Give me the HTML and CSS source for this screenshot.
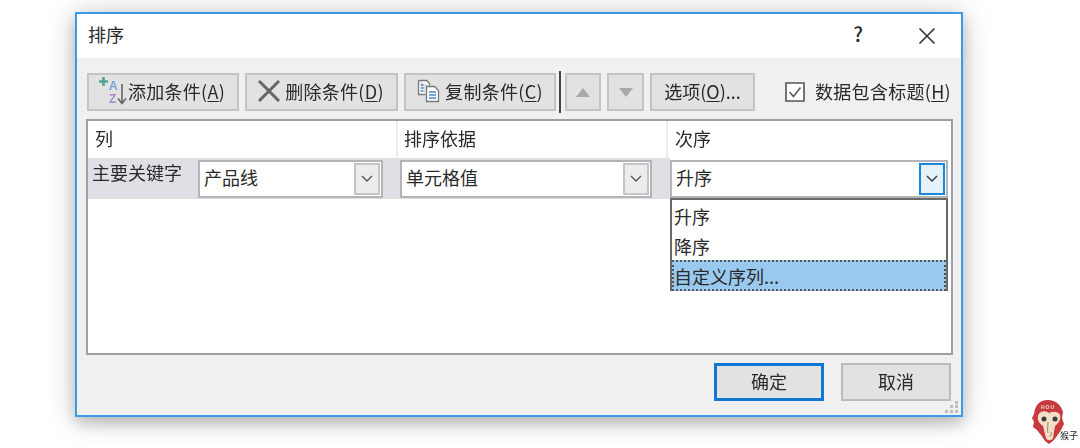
FILE: index.html
```html
<!DOCTYPE html>
<html lang="zh-CN">
<head>
<meta charset="utf-8">
<title>排序</title>
<link rel="stylesheet" href="styles.css">
</head>
<body>
<div class="dialog">
  <header class="titlebar">
    <span class="title">排序</span>
    <span class="help">?</span>
    <svg class="close" width="18" height="18" viewBox="0 0 18 18"><path d="M1.500 1.500 16.500 16.500M16.500 1.500 1.500 16.500" stroke="#333" stroke-width="1.600" fill="none"/></svg>
  </header>
  <div class="content">
    <div class="toolbar">
      <button class="btn btn-wide">
        <svg class="ico-sort" width="29" height="32" viewBox="0 0 29 32">
          <path d="M4.500 2v9M0 6.500h9" stroke="#4fa58c" stroke-width="2.600"/>
          <text x="10" y="15" class="ico-a">A</text>
          <text x="10" y="28" class="ico-z">Z</text>
          <path d="M23 9v19M19 23.500l4 5 4-5" stroke="#666" stroke-width="1.600" fill="none"/>
        </svg>
        <span class="btn-label">添加条件(<u>A</u>)</span>
      </button>
      <button class="btn btn-del">
        <svg width="22" height="22" viewBox="0 0 22 22"><path d="M1 1 21 21M21 1 1 21" stroke="#666" stroke-width="3" fill="none"/></svg>
        <span class="btn-label">删除条件(<u>D</u>)</span>
      </button>
      <button class="btn btn-copy">
        <svg width="24" height="24" viewBox="0 0 24 24">
          <path d="M1.500 1.500h8l3 3v2M1.500 1.500v14h7" fill="#fff" stroke="#777" stroke-width="1.300"/>
          <path d="M9.500 7.500h8l4 4v11h-12z" fill="#fff" stroke="#777" stroke-width="1.300"/>
          <path d="M3.500 6h3M3.500 9h3M3.500 12h3" stroke="#4d86c6" stroke-width="1.300"/>
          <path d="M12 13h7M12 16h7M12 19h7" stroke="#4d86c6" stroke-width="1.300"/>
        </svg>
        <span class="btn-label">复制条件(<u>C</u>)</span>
      </button>
      <span class="tool-sep"></span>
      <button class="btn btn-arrow btn-up"><span class="tri tri-up"></span></button>
      <button class="btn btn-arrow"><span class="tri tri-down"></span></button>
      <button class="btn btn-options">选项(<u>O</u>)...</button>
      <label class="check">
        <svg width="20" height="20" viewBox="0 0 20 20"><path d="M1 1h18v18H1z" fill="#fff" stroke="#555" stroke-width="1.600"/><path d="M4.500 10l4 4.500 7-9" stroke="#555" stroke-width="1.500" fill="none"/></svg>
        <span class="btn-label">数据包含标题(<u>H</u>)</span>
      </label>
    </div>
    <div class="grid">
      <div class="head-row">
        <div class="head-cell head-a">列</div>
        <div class="head-cell head-b">排序依据</div>
        <div class="head-cell head-c">次序</div>
      </div>
      <div class="row">
        <div class="row-label">主要关键字</div>
        <div class="combo combo-a"><span class="combo-text">产品线</span>
          <span class="arrow"><svg width="12" height="8" viewBox="0 0 12 8"><path d="M1 1l5 5 5-5" stroke="#555" stroke-width="1.400" fill="none"/></svg></span></div>
        <div class="combo combo-b"><span class="combo-text">单元格值</span>
          <span class="arrow"><svg width="12" height="8" viewBox="0 0 12 8"><path d="M1 1l5 5 5-5" stroke="#555" stroke-width="1.400" fill="none"/></svg></span></div>
        <div class="combo combo-c"><span class="combo-text">升序</span>
          <span class="arrow arrow-on"><svg width="12" height="8" viewBox="0 0 12 8"><path d="M1 1l5 5 5-5" stroke="#333" stroke-width="1.400" fill="none"/></svg></span>
          <ul class="menu">
            <li class="menu-item">升序</li>
            <li class="menu-item">降序</li>
            <li class="menu-item menu-sel">自定义序列...</li>
          </ul>
        </div>
      </div>
    </div>
    <div class="footer">
      <button class="btn btn-foot btn-ok">确定</button>
      <button class="btn btn-foot btn-cancel">取消</button>
    </div>
    <svg class="grip" width="14" height="14" viewBox="0 0 14 14" fill="#bdbdbd">
      <rect x="10" y="1" width="3" height="3"/><rect x="5" y="5" width="3" height="3"/><rect x="10" y="5" width="3" height="3"/>
      <rect x="0" y="10" width="3" height="3"/><rect x="5" y="10" width="3" height="3"/><rect x="10" y="10" width="3" height="3"/>
    </svg>
  </div>
</div>
<div class="mascot">
  <svg width="32" height="44" viewBox="0 0 32 44">
    <path d="M16 0C7 0 3 6 2 14L0 18l2 4-1 5 4 3 4 5 4 6 4 3 4-3 4-5 4-6 3-6-2-6 1-6C29 5 24 0 16 0z" fill="#c63a40"/>
    <path d="M17 13C13 10 7 11 6 16c-1 5 2 8 5 10l3 12c1 3 6 3 7 0l2-12c4-3 6-7 5-11-2-4-7-4-11-2z" fill="#f1dfc8"/>
    <circle cx="12" cy="19" r="2.500" fill="#3c3a38"/><circle cx="23" cy="19" r="2.500" fill="#3c3a38"/>
    <path d="M16 22c0 4-1 8 0 11M19 32c1 2 0 4-2 4" stroke="#8a6a50" stroke-width=".8" fill="none"/>
    <text x="16" y="9" class="mascot-mark">HOU</text>
  </svg>
  <span class="mascot-name">猴子</span>
</div>
</body>
</html>
```
FILE: styles.css
```css
* { box-sizing: border-box; }
html, body { margin: 0; height: 100%; }
body {
  position: relative;
  width: 1080px;
  height: 448px;
  overflow: hidden;
  background: #fff;
  padding: 12px 0 0 75px;
  font-family: "Noto Sans CJK SC", "Liberation Sans", sans-serif;
  font-size: 18px;
  line-height: 24px;
  color: #2a2a2a;
}
u { text-underline-offset: 2px; }
.dialog {
  width: 888px;
  height: 405px;
  border: 2px solid #3d9ae6;
  background: #f0f0f0;
  box-shadow: 0 6px 14px rgba(0, 0, 0, .2), 0 2px 30px rgba(0, 0, 0, .2);
  display: flex;
  flex-direction: column;
  filter: blur(.6px);
}
.titlebar {
  height: 44px;
  flex: none;
  background: #fff;
  display: flex;
  align-items: center;
  padding: 0 25px 4px 11px;
}
.title { flex: 1; }
.help { margin-right: 55px; font-size: 20px; font-weight: 500; }
.close { margin-top: 4px; }
.content { flex: 1; position: relative; }
.toolbar {
  display: flex;
  align-items: center;
  height: 38px;
  margin: 15px 0 8px 10px;
}
.btn {
  height: 38px;
  padding: 0 0 2px;
  border: 2px solid #c4c4c4;
  background: #e2e2e2;
  color: inherit;
  font: inherit;
  display: flex;
  align-items: center;
  justify-content: center;
}
.btn-label { letter-spacing: .3px; }
.btn-wide { width: 152px; margin-right: 6px; padding-right: 2px; }
.btn-del { width: 153px; gap: 5px; margin-right: 6px; padding-right: 1px; }
.btn-copy { width: 152px; gap: 4px; }
.tool-sep {
  width: 2px;
  height: 42px;
  background: #444;
  margin: 0 4px 0 3px;
}
.btn-arrow { width: 37px; margin-right: 6px; padding: 0; }
.btn-up { width: 36px; }
.btn-options { width: 105px; }
.tri { width: 0; height: 0; border-left: 7px solid transparent; border-right: 7px solid transparent; }
.tri-up { border-bottom: 9px solid #a8a8a8; }
.tri-down { border-top: 9px solid #a8a8a8; }
.check {
  display: flex;
  align-items: center;
  gap: 10px;
  margin-left: 30px;
  white-space: nowrap;
}
.check span { margin-top: -2px; }
.ico-a, .ico-z { font-family: "Liberation Sans", sans-serif; font-weight: 700; font-size: 12px; }
.ico-a { fill: #6ea5d8; }
.ico-z { fill: #a98ad0; }
.grid {
  width: 867px;
  height: 236px;
  margin-left: 9px;
  border: 2px solid #9c9fa3;
  background: #fff;
}
.head-row {
  display: grid;
  grid-template-columns: 310px 270px 1fr;
  height: 37px;
}
.head-cell {
  padding: 5px 0 0 7px;
  border-right: 2px solid #ececec;
}
.head-b { padding-left: 6px; }
.head-c { padding-left: 7px; border-right: 0; }
.row {
  display: flex;
  height: 41px;
  padding: 2px 3px 1px 4px;
  background: linear-gradient(to right, #dfdfe6 582px, #fff 582px);
}
.row-label { width: 106px; }
.combo {
  position: relative;
  height: 38px;
  display: flex;
  align-items: center;
  justify-content: space-between;
  padding: 0 1px 0 4px;
  background: #fff;
  border: 2px solid #b4b4b8;
}
.combo-text { margin-top: -4px; }
.combo-a { width: 185px; margin-right: 17px; }
.combo-b { width: 252px; margin-right: 18px; }
.combo-c { width: 278px; }
.arrow {
  width: 26px;
  height: 32px;
  border: 2px solid #c4c4c4;
  background: #ececec;
  display: flex;
  align-items: center;
  justify-content: center;
}
.arrow-on { border-color: #1a87dc; background: #e5f1fb; }
.menu {
  position: absolute;
  z-index: 2;
  left: -2px;
  right: -2px;
  top: 36px;
  height: 93px;
  margin: 0;
  padding: 0;
  list-style: none;
  background: #fff;
  border: 2px solid #6a6a6a;
}
.menu-item {
  height: 30px;
  padding: 4px 0 0 2px;
}
.menu-sel {
  height: 31px;
  margin-bottom: -2px;
  background: #99c9ef;
  outline: 2px dotted #555;
  outline-offset: -2px;
}
.footer {
  display: flex;
  justify-content: flex-end;
  gap: 17px;
  margin-top: 8px;
  padding-right: 10px;
}
.btn-foot { width: 110px; }
.btn-ok { border: 3px solid #0f78d4; }
.btn-cancel { border-color: #bcbcbc; }
.grip { position: absolute; right: 2px; bottom: 1px; }
.mascot {
  position: absolute;
  left: 1032px;
  top: 400px;
  width: 48px;
  height: 44px;
  filter: blur(.4px);
}
.mascot-mark {
  font-family: "Liberation Sans", sans-serif;
  font-size: 5px;
  font-weight: 700;
  fill: #f4d9d0;
  text-anchor: middle;
  letter-spacing: 1px;
}
.mascot-name {
  position: absolute;
  left: 28px;
  top: 30px;
  font-size: 9px;
  line-height: 12px;
  color: #222;
}
```
